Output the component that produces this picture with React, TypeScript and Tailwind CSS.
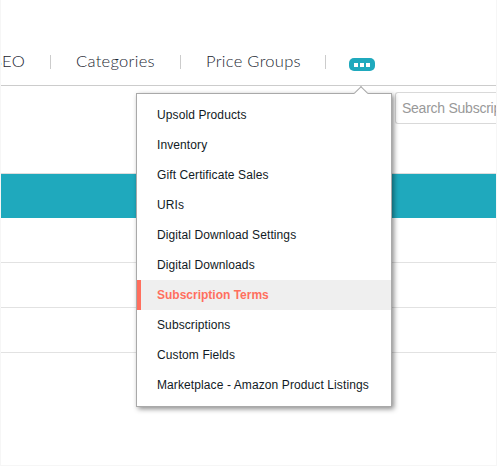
const items = [
  "Upsold Products",
  "Inventory",
  "Gift Certificate Sales",
  "URIs",
  "Digital Download Settings",
  "Digital Downloads",
  "Subscription Terms",
  "Subscriptions",
  "Custom Fields",
  "Marketplace - Amazon Product Listings",
];

function Sep() {
  return <span className="h-[14px] w-px bg-[#cccccc] shrink-0" />;
}

export default function App() {
  return (
    <div className="relative w-[497px] h-[466px] overflow-hidden bg-white border-x border-b border-[#f6f6f6] font-['Liberation_Sans',sans-serif]">
      <div className="h-[86px] border-b border-[#cccccc] flex items-center pt-[47px] pb-[9px] overflow-hidden whitespace-nowrap text-[16.5px] font-light text-[#1a2530] font-['Lato',sans-serif] tracking-[0.3px]">
        <span className="w-[24px] shrink-0 flex justify-end overflow-hidden"><span>SEO</span></span>
        <span className="w-[25px] shrink-0" />
        <Sep />
        <span className="w-[25px] shrink-0" />
        <span className="w-[79px] shrink-0">Categories</span>
        <span className="w-[25px] shrink-0" />
        <Sep />
        <span className="w-[25px] shrink-0" />
        <span className="w-[94px] shrink-0">Price Groups</span>
        <span className="w-[25px] shrink-0" />
        <Sep />
        <span className="w-[23px] shrink-0" />
        <span className="w-[26px] h-[13px] rounded-[5px] bg-[#1fa9bd] flex items-center justify-center gap-[2px] shrink-0 mt-[6px]">
          <span className="w-[4px] h-[4px] bg-white" />
          <span className="w-[4px] h-[4px] bg-white" />
          <span className="w-[4px] h-[4px] bg-white" />
        </span>
      </div>

      <div className="flex justify-end pt-[6px] h-[87px]">
        <div className="w-[101px] h-[32px] border border-[#d9d9d9] border-r-0 rounded-l-[3px] flex items-center pl-[6px] text-[14px] text-[#999999] tracking-[-0.25px] overflow-hidden whitespace-nowrap">
          Search Subscription Terms
        </div>
      </div>

      <div className="h-[45px] bg-[#1fa9bd] border-t border-[#dddddd]" />
      {[0, 1, 2].map((i) => (
        <div key={i} className="h-[45px] border-b border-[#e2e2e2]" />
      ))}

      <div className="absolute left-[135px] top-[93px] w-[256px] h-[314px] bg-white border border-[#a9a9a9] shadow-[2px_2px_5px_rgba(0,0,0,0.45)] py-[6px]">
        <div className="absolute right-[25px] top-[-6px] w-[10px] h-[10px] rotate-45 bg-white border-l border-t border-[#a9a9a9]" />
        {items.map((t) => {
          const active = t === "Subscription Terms";
          return (
            <div
              key={t}
              className={
                active
                  ? "relative h-[30px] flex items-center pl-[16px] border-l-[4px] border-[#ff6f5e] bg-[#efefef] text-[12px] font-bold text-[#ff6f5e]"
                  : "relative h-[30px] flex items-center pl-[20px] text-[12px] text-[#111a24] tracking-[0.1px]"
              }
            >
              {t}
            </div>
          );
        })}
      </div>
    </div>
  );
}
